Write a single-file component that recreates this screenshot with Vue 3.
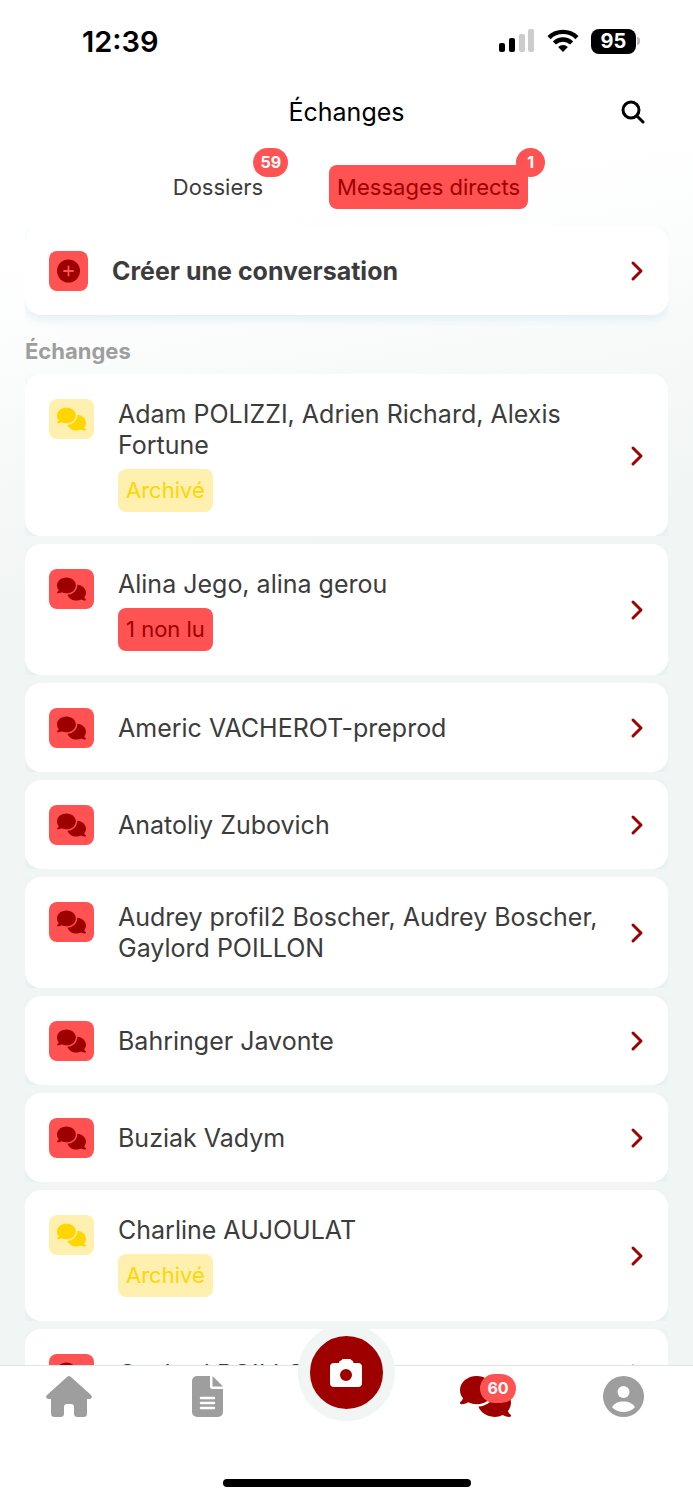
<template>
  <div class="screen">
    <header class="top">
      <div class="status-bar">
        <span class="time">12:39</span>
        <div class="status-icons">
          <svg width="36" height="24" viewBox="0 0 36 24" aria-hidden="true">
            <rect x="0" y="14" width="6" height="9" rx="2" />
            <rect x="10" y="9" width="6" height="14" rx="2" />
            <rect x="20" y="5" width="6" height="18" rx="2" fill="#ccc" />
            <rect x="29" y="0" width="6" height="23" rx="2" fill="#ccc" />
          </svg>
          <svg width="32" height="24" viewBox="0 0 32 24" aria-hidden="true">
            <g fill="none" stroke="#000" stroke-width="4.4">
              <path d="M2 8.6a20 20 0 0 1 28 0" />
              <path d="M7.4 14a12.4 12.4 0 0 1 17.2 0" />
            </g>
            <path d="M16 23l-4.900-4.900a7 7 0 0 1 9.800 0z" />
          </svg>
          <span class="battery">95</span>
        </div>
      </div>

      <div class="title-bar">
        <h1>Échanges</h1>
        <button class="search" aria-label="Rechercher">
          <svg width="24" height="24" viewBox="0 0 24 24" aria-hidden="true">
            <circle cx="10" cy="10" r="8" />
            <path d="M16 16l6 6" />
          </svg>
        </button>
      </div>

      <nav class="tabs">
        <button
          v-for="tab in tabs"
          :key="tab.label"
          :class="['tab', { active: tab.label === currentTab }]"
          @click="currentTab = tab.label"
        >
          {{ tab.label }}
          <span class="badge">{{ tab.count }}</span>
        </button>
      </nav>
    </header>

    <main class="content">
      <button class="card create">
        <span class="icon-box">
          <svg width="23" height="24" viewBox="0 0 23 24" aria-hidden="true">
            <circle cx="11.500" cy="12" r="11.500" />
            <path d="M11.500 7.500v9M7 12h9" stroke="#ff5252" stroke-width="1.800" stroke-linecap="round" />
          </svg>
        </span>
        <span class="card-body">Créer une conversation</span>
        <svg class="chevron" width="14" height="22" viewBox="0 0 14 22" aria-hidden="true">
          <path d="M3 3l8 8l-8 8" />
        </svg>
      </button>

      <h2>Échanges</h2>

      <ul class="conversations">
        <li v-for="item in conversations" :key="item.name">
          <button class="card">
            <span :class="['icon-box', { archived: item.archived }]">
              <svg width="29" height="24" viewBox="0 0 640 512" aria-hidden="true">
                <path :d="commentsIcon" />
              </svg>
            </span>
            <span class="card-body">
              <span>{{ item.name }}</span>
              <span v-if="item.archived" class="pill archived">Archivé</span>
              <span v-if="item.unread" class="pill">{{ item.unread }} non lu</span>
            </span>
            <svg class="chevron" width="14" height="22" viewBox="0 0 14 22" aria-hidden="true">
              <path d="M3 3l8 8l-8 8" />
            </svg>
          </button>
        </li>
      </ul>
    </main>

    <footer class="bottom">
      <nav class="nav-bar">
        <a href="#" aria-label="Accueil">
          <svg width="46" height="41" viewBox="0 0 46 41" aria-hidden="true">
            <path
              d="M21.300.8a2.500 2.500 0 0 1 3.400 0L45 19c1.800 1.700.7 4-1.500 4H41v14.500a3.500 3.500 0 0 1-3.500 3.500h-6a3.500 3.500 0 0 1-3.500-3.500V31a3 3 0 0 0-3-3h-4a3 3 0 0 0-3 3v6.500a3.500 3.500 0 0 1-3.500 3.500h-6A3.500 3.500 0 0 1 5 37.500V23H2.500C.3 23-.8 20.700 1 19z"
            />
          </svg>
        </a>
        <a href="#" aria-label="Documents">
          <svg width="31" height="41" viewBox="0 0 31 41" aria-hidden="true">
            <path
              d="M5 0h13v10.500a2.500 2.500 0 0 0 2.500 2.500H31v23a5 5 0 0 1-5 5H5a5 5 0 0 1-5-5V5a5 5 0 0 1 5-5zM20.500 0L31 10.500H20.500z"
            />
            <path d="M9 22h13M9 27h13M9 32h13" stroke="#fff" stroke-width="2.400" stroke-linecap="round" />
          </svg>
        </a>
        <a href="#" class="camera" aria-label="Appareil photo">
          <svg width="32" height="28" viewBox="0 0 32 28" aria-hidden="true">
            <path
              fill-rule="evenodd"
              d="M4 4h5V3.500Q9.300 1.500 11.500 1.200Q12 0 13.500 0h6Q21 0 21.500 1.200Q23.500 1.500 23.500 4H28a4 4 0 0 1 4 4v16a4 4 0 0 1-4 4H4a4 4 0 0 1-4-4V8a4 4 0 0 1 4-4zm12 6a6 6 0 1 0 0 12a6 6 0 0 0 0-12z"
            />
          </svg>
        </a>
        <a href="#" class="current" aria-label="Échanges">
          <svg width="51" height="41" viewBox="0 0 640 512" aria-hidden="true">
            <path :d="commentsIcon" />
          </svg>
          <span class="badge">60</span>
        </a>
        <a href="#" aria-label="Profil">
          <svg width="41" height="41" viewBox="0 0 41 41" aria-hidden="true">
            <circle cx="20.500" cy="20.500" r="20.500" />
            <circle cx="20.500" cy="16" r="6" fill="#fff" />
            <path d="M9 31.200c2.500-4 6.500-5.700 11.500-5.700s9 1.700 11.500 5.700c-3 3.200-7 4.800-11.500 4.800S12 34.400 9 31.200z" fill="#fff" />
          </svg>
        </a>
      </nav>
      <div class="home-indicator"></div>
    </footer>
  </div>
</template>

<script setup>
import { ref } from 'vue'

const tabs = [
  { label: 'Dossiers', count: 59 },
  { label: 'Messages directs', count: 1 },
]
const currentTab = ref('Messages directs')

const conversations = ref([
  { name: 'Adam POLIZZI, Adrien Richard, Alexis Fortune', archived: true },
  { name: 'Alina Jego, alina gerou', unread: 1 },
  { name: 'Americ VACHEROT-preprod' },
  { name: 'Anatoliy Zubovich' },
  { name: 'Audrey profil2 Boscher, Audrey Boscher, Gaylord POILLON' },
  { name: 'Bahringer Javonte' },
  { name: 'Buziak Vadym' },
  { name: 'Charline AUJOULAT', archived: true },
  { name: 'Gaylord POILLON' },
])

const commentsIcon =
  'M208 352c114.900 0 208-78.800 208-176S322.900 0 208 0S0 78.800 0 176c0 38.600 14.700 74.300 39.600 103.400c-3.500 9.400-8.700 17.700-14.200 24.700c-4.800 6.200-9.700 11-13.300 14.300c-1.800 1.600-3.300 2.900-4.300 3.700c-.5 .4-.9 .7-1.100 .8l-.2 .2C1 327.200-1.400 334.400 .8 340.900S9.100 352 16 352c21.800 0 43.800-5.600 62.100-12.500c9.200-3.500 17.800-7.400 25.200-11.400C134.100 343.300 169.800 352 208 352zM448 176c0 112.300-99.100 196.900-216.500 207C255.800 457.400 336.400 512 432 512c38.200 0 73.900-8.700 104.700-23.900c7.500 4 16 7.900 25.200 11.400c18.300 6.900 40.300 12.500 62.100 12.500c6.900 0 13.100-4.500 15.200-11.100c2.100-6.600-.2-13.800-5.800-17.900l-.2-.2c-.2-.2-.6-.4-1.100-.8c-1-.8-2.500-2-4.300-3.700c-3.600-3.300-8.500-8.100-13.300-14.300c-5.500-7-10.700-15.400-14.200-24.700c24.900-29 39.600-64.700 39.600-103.400c0-92.800-84.900-168.900-192.600-175.500c.4 5.100 .6 10.300 .6 15.500z'
</script>

<style>
body {
  margin: 0;
}
</style>

<style scoped>
.screen {
  display: flex;
  flex-direction: column;
  height: 100vh;
  overflow: hidden;
  background: linear-gradient(170deg, #fff 16%, #f1f5f4 38%);
  color: #3c3c3c;
  font-family: Inter, 'Liberation Sans', sans-serif;
  font-size: 25px;
  line-height: 31px;
}

button {
  padding: 0;
  border: 0;
  background: none;
  color: inherit;
  font: inherit;
  cursor: pointer;
}

svg {
  display: block;
  flex-shrink: 0;
}

.status-bar {
  display: flex;
  align-items: center;
  justify-content: space-between;
  height: 82px;
  padding: 0 57px 0 82px;
  color: #000;
}

.time {
  font-size: 29px;
  font-weight: 600;
}

.status-icons {
  display: flex;
  align-items: center;
  gap: 12px;
}

.battery {
  position: relative;
  width: 45px;
  border-radius: 8px;
  background: #000;
  color: #fff;
  font-size: 20px;
  font-weight: 700;
  line-height: 25px;
  text-align: center;
}

.battery::after {
  content: '';
  position: absolute;
  top: 8px;
  right: -4px;
  width: 3px;
  height: 8px;
  border-radius: 0 4px 4px 0;
  background: #bbb;
}

.title-bar {
  display: grid;
  grid-template-columns: 1fr auto 1fr;
  align-items: center;
  height: 60px;
  padding: 0 48px;
}

h1 {
  grid-column: 2;
  margin: 0;
  color: #000;
  font-size: 25px;
  font-weight: 400;
}

.search {
  justify-self: end;
}

.search svg {
  fill: none;
  stroke: #000;
  stroke-width: 3;
  stroke-linecap: round;
}

.tabs {
  display: flex;
  justify-content: center;
  gap: 58px;
  padding: 23px 0 17px;
}

.tab {
  position: relative;
  padding: 0 8px;
  border-radius: 8px;
  font-size: 22px;
  line-height: 44px;
}

.tab.active {
  background: #ff5252;
  color: #9e0000;
}

.badge {
  position: absolute;
  top: -17px;
  right: -17px;
  min-width: 29px;
  box-sizing: border-box;
  padding: 0 7px;
  border-radius: 15px;
  background: #ff5252;
  color: #fff;
  font-size: 16px;
  font-weight: 700;
  line-height: 29px;
  text-align: center;
}

.content {
  flex: 1;
  min-height: 0;
  padding: 0 25px;
  overflow: hidden;
}

.card {
  display: flex;
  align-items: center;
  gap: 24px;
  width: 100%;
  min-height: 89px;
  padding: 25px 24px 24px;
  border-radius: 16px;
  background: #fff;
  box-shadow: 0 4px 10px #dfeef2;
  text-align: left;
}

/* the shadow only shows below the card */
.create {
  clip-path: inset(0 0 -20px 0);
  font-weight: 700;
}

.icon-box {
  align-self: flex-start;
  padding: 8px;
  border-radius: 8px;
  background: #ff5252;
  fill: #9e0000;
}

.icon-box.archived {
  background: #fff0b0;
  fill: #ffd600;
}

.card-body {
  display: flex;
  flex: 1;
  flex-direction: column;
  align-items: flex-start;
  gap: 8px;
}

.pill {
  padding: 0 8px;
  border-radius: 8px;
  background: #ff5252;
  color: #9e0000;
  font-size: 22px;
  line-height: 43px;
}

.pill.archived {
  background: #fff0b0;
  color: #ffd600;
}

.chevron {
  fill: none;
  stroke: #9e0000;
  stroke-width: 3;
  stroke-linecap: round;
  stroke-linejoin: round;
}

h2 {
  margin: 21px 0 7px;
  color: #9e9e9e;
  font-size: 22px;
  font-weight: 700;
}

.conversations {
  display: flex;
  flex-direction: column;
  gap: 8px;
  margin: 0;
  padding: 0;
  list-style: none;
}

.conversations li {
  overflow: hidden;
}

.bottom {
  border-top: 1px solid #e0e3e3;
  background: #fff;
}

.nav-bar {
  display: grid;
  grid-template-columns: repeat(5, 1fr);
  justify-items: center;
  align-items: start;
  height: 105px;
}

.nav-bar a {
  position: relative;
  margin-top: 10px;
  fill: #9e9e9e;
}

.nav-bar .camera {
  display: flex;
  align-items: center;
  justify-content: center;
  width: 73px;
  height: 73px;
  margin-top: -42px;
  border: 12px solid #f1f5f4;
  border-radius: 50%;
  background: #9e0000;
  fill: #fff;
}

.nav-bar .current {
  fill: #9e0000;
}

.nav-bar .badge {
  top: -2px;
  right: -5px;
}

.home-indicator {
  width: 248px;
  height: 8px;
  margin: 8px auto 13px;
  border-radius: 4px;
  background: #000;
}
</style>
